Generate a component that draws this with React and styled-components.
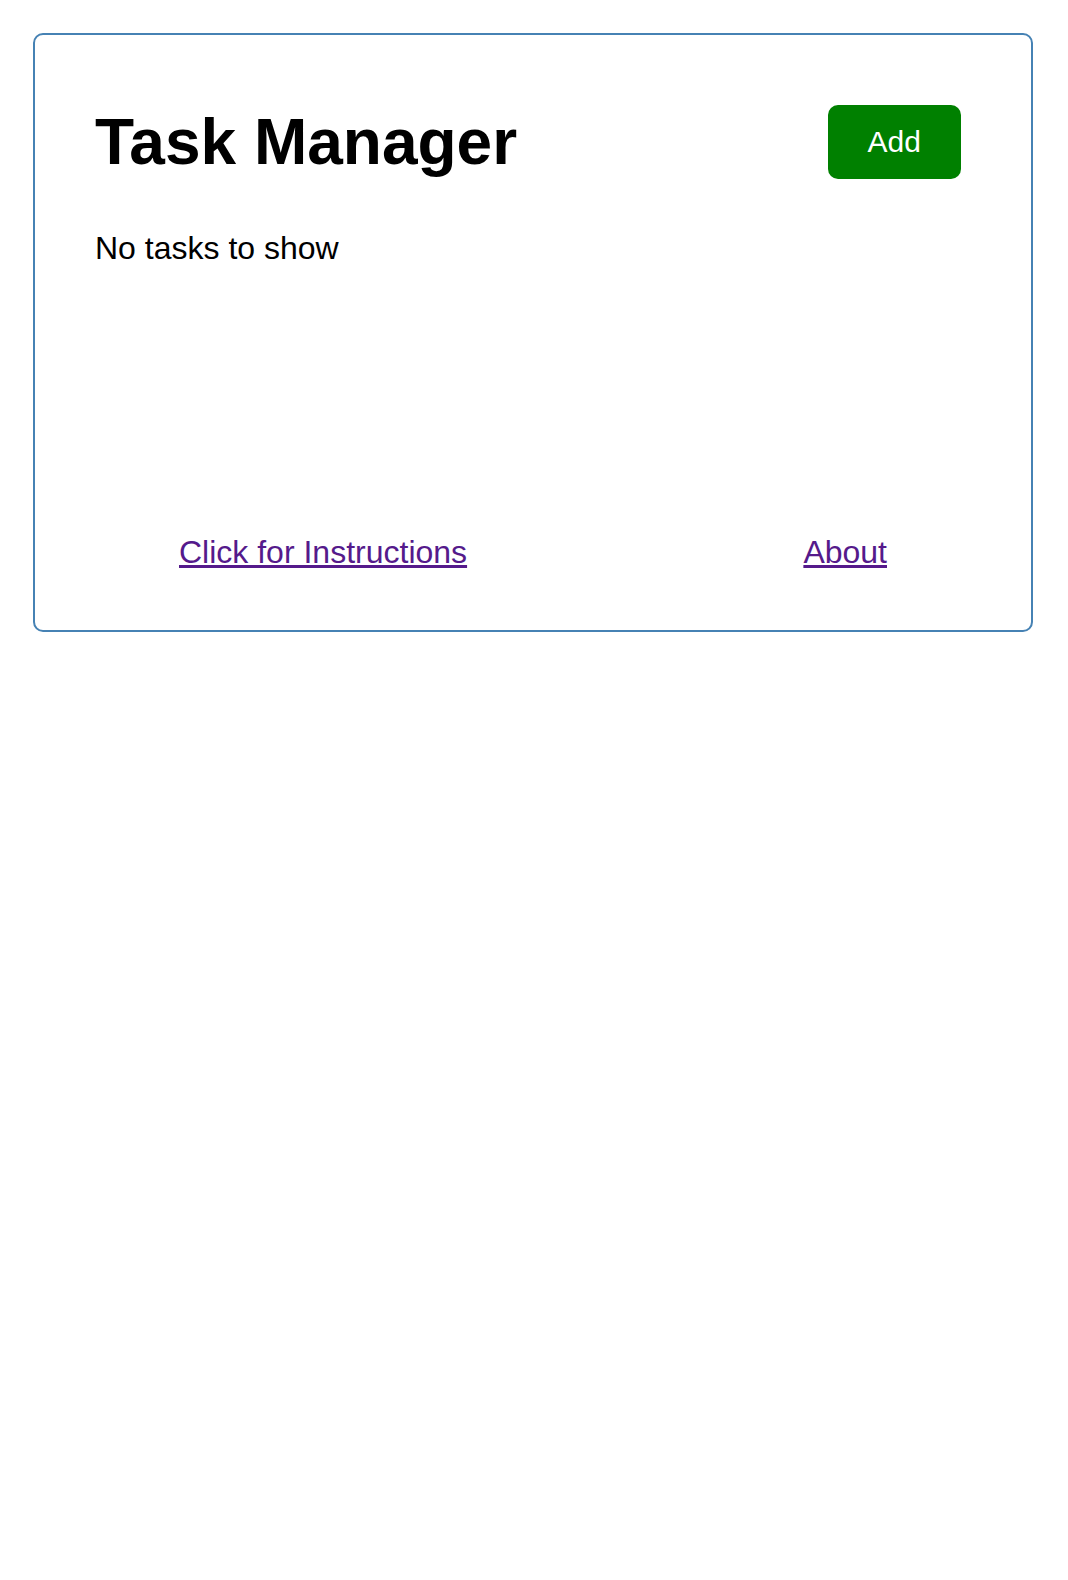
import React from "react";
import styled, { createGlobalStyle } from "styled-components";

const Global = createGlobalStyle`
  html, body { margin: 0; padding: 0; background: #fff; }
  body { font-family: "Liberation Sans", Arial, Helvetica, sans-serif; color: #000; }
`;

const Card = styled.div`
  box-sizing: border-box;
  width: 1000px;
  height: 599px;
  margin: 33px 0 0 33px;
  padding: 60px 60px 59px;
  border: 2px solid #4682b4;
  border-radius: 10px;
  display: flex;
  flex-direction: column;
`;

const Header = styled.header`
  display: flex;
  justify-content: space-between;
  align-items: center;
  margin-bottom: 41px;
`;

const Title = styled.h1`
  margin: 0;
  font-size: 64px;
  font-weight: 700;
  line-height: normal;
`;

const Button = styled.button`
  display: inline-block;
  margin: 10px;
  padding: 20px 40px;
  border: none;
  border-radius: 10px;
  background: ${(p) => p.$bg || "#000"};
  color: #fff;
  font-family: inherit;
  font-size: 30px;
  line-height: normal;
  cursor: pointer;
`;

const Empty = styled.p`
  margin: 0;
  font-size: 32px;
  line-height: normal;
`;

const Footer = styled.footer`
  margin-top: auto;
  display: flex;
  justify-content: space-between;
  padding: 0 84px;
`;

const Link = styled.a`
  font-size: 32px;
  line-height: normal;
  color: #551a8b;
  text-decoration: underline;
`;

export default function App() {
  return (
    <>
      <Global />
      <Card>
        <Header>
          <Title>Task Manager</Title>
          <Button $bg="#008000">Add</Button>
        </Header>
        <Empty>No tasks to show</Empty>
        <Footer>
          <Link href="#instructions">Click for Instructions</Link>
          <Link href="#about">About</Link>
        </Footer>
      </Card>
    </>
  );
}
